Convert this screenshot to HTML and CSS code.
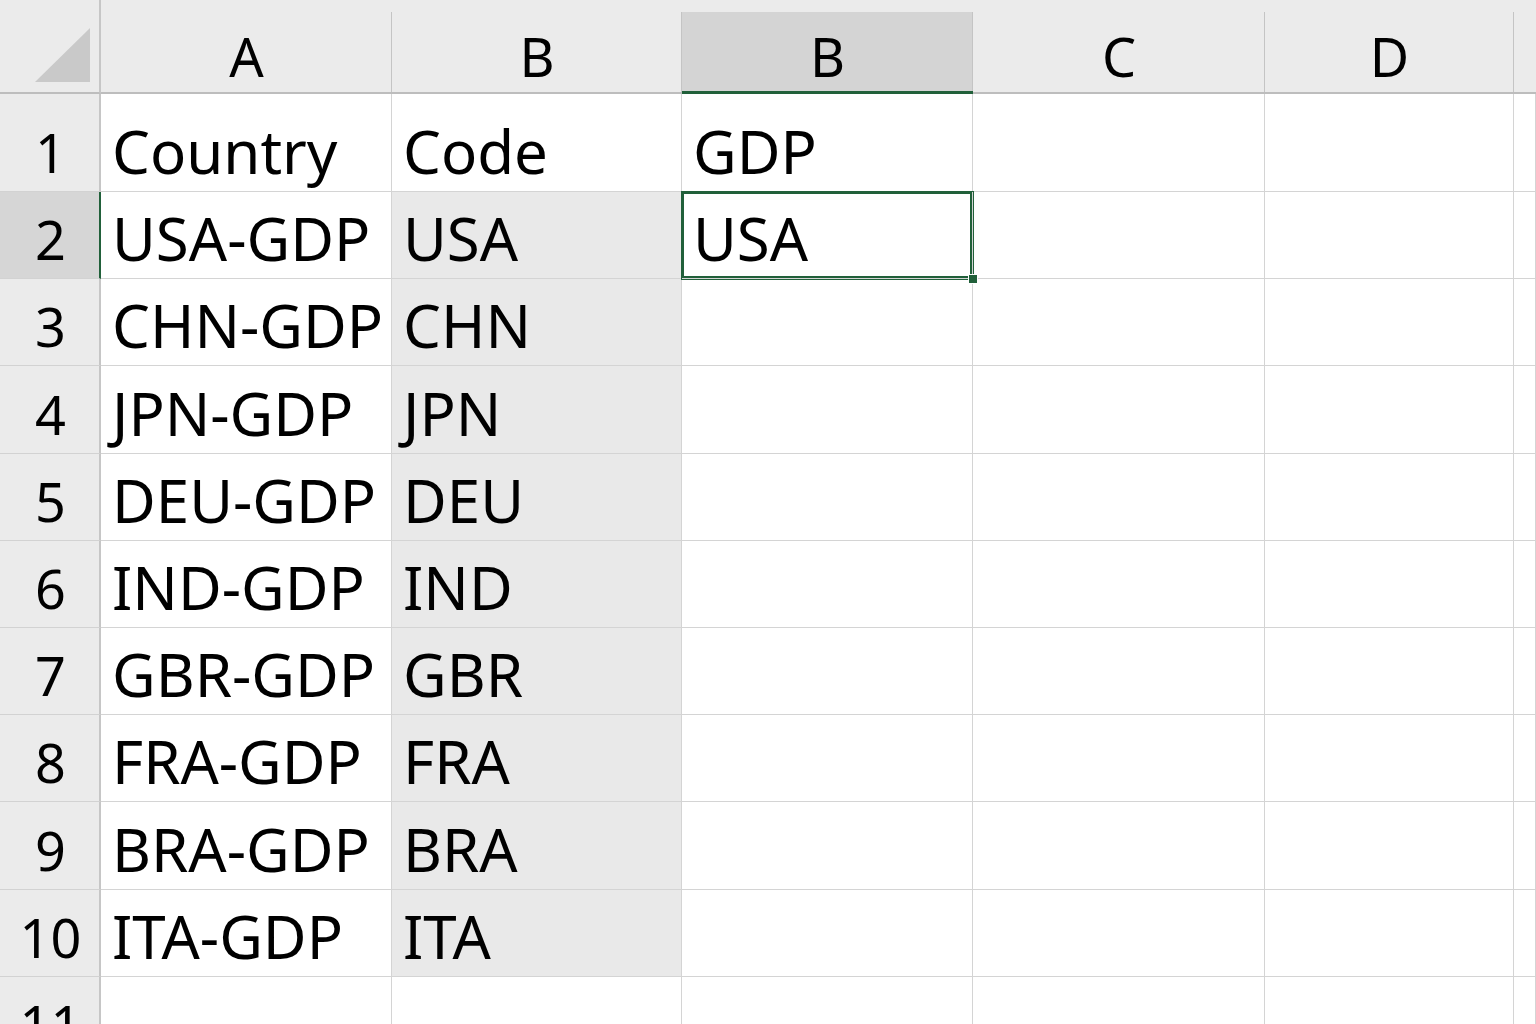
FILE: index.html
```html
<!DOCTYPE html>
<html lang="en">
<head>
  <meta charset="UTF-8">
  <title>Sheet1</title>
  <link rel="stylesheet" href="styles.css">
</head>
<body>
  <div class="sheet">
    <!-- column headers -->
    <div class="corner"><div class="corner-tri"></div></div>
    <div class="col-head">A</div>
    <div class="col-head">B</div>
    <div class="col-head selected">B</div>
    <div class="col-head">C</div>
    <div class="col-head">D</div>
    <div class="col-head last"></div>

    <div class="row-head">1</div>
    <div class="cell">Country</div>
    <div class="cell">Code</div>
    <div class="cell">GDP</div>
    <div class="cell"></div><div class="cell"></div><div class="cell last"></div>

    <div class="row-head selected">2</div>
    <div class="cell row-mark">USA-GDP</div>
    <div class="cell shaded">USA</div>
    <div class="cell active">USA<span class="handle"></span></div>
    <div class="cell"></div><div class="cell"></div><div class="cell last"></div>

    <div class="row-head">3</div>
    <div class="cell">CHN-GDP</div>
    <div class="cell shaded">CHN</div>
    <div class="cell"></div><div class="cell"></div><div class="cell"></div><div class="cell last"></div>

    <div class="row-head">4</div>
    <div class="cell">JPN-GDP</div>
    <div class="cell shaded">JPN</div>
    <div class="cell"></div><div class="cell"></div><div class="cell"></div><div class="cell last"></div>

    <div class="row-head">5</div>
    <div class="cell">DEU-GDP</div>
    <div class="cell shaded">DEU</div>
    <div class="cell"></div><div class="cell"></div><div class="cell"></div><div class="cell last"></div>

    <div class="row-head">6</div>
    <div class="cell">IND-GDP</div>
    <div class="cell shaded">IND</div>
    <div class="cell"></div><div class="cell"></div><div class="cell"></div><div class="cell last"></div>

    <div class="row-head">7</div>
    <div class="cell">GBR-GDP</div>
    <div class="cell shaded">GBR</div>
    <div class="cell"></div><div class="cell"></div><div class="cell"></div><div class="cell last"></div>

    <div class="row-head">8</div>
    <div class="cell">FRA-GDP</div>
    <div class="cell shaded">FRA</div>
    <div class="cell"></div><div class="cell"></div><div class="cell"></div><div class="cell last"></div>

    <div class="row-head">9</div>
    <div class="cell">BRA-GDP</div>
    <div class="cell shaded">BRA</div>
    <div class="cell"></div><div class="cell"></div><div class="cell"></div><div class="cell last"></div>

    <div class="row-head">10</div>
    <div class="cell">ITA-GDP</div>
    <div class="cell shaded">ITA</div>
    <div class="cell"></div><div class="cell"></div><div class="cell"></div><div class="cell last"></div>

    <div class="row-head">11</div>
    <div class="cell"></div><div class="cell"></div><div class="cell"></div><div class="cell"></div><div class="cell"></div><div class="cell last"></div>
  </div>
</body>
</html>
```

FILE: styles.css
```css
* {
  margin: 0;
  padding: 0;
  box-sizing: border-box;
}

body {
  font-family: "Noto Sans", "Open Sans", sans-serif;
  background-color: #ffffff;
  color: #000;
  width: 1536px;
  height: 1024px;
  overflow: hidden;
}

.sheet {
  display: grid;
  grid-template-columns: 101px 291px 290px 291px 292px 249px 1fr;
  grid-template-rows: 94px 98px 87px 87px 88px 87px 87px 87px 87px 88px 87px 87px;
}

.corner {
  background-color: #ebebeb;
  border-right: 2px solid #c6c6c6;
  border-bottom: 2px solid #bdbdbd;
  position: relative;
}

.corner-tri {
  position: absolute;
  left: 35px;
  top: 28px;
  width: 55px;
  height: 54px;
  background-color: #c9c9c9;
  clip-path: polygon(100% 0, 100% 100%, 0 100%);
}

.col-head {
  background-color: #ebebeb;
  border-bottom: 2px solid #bdbdbd;
  display: flex;
  justify-content: center;
  align-items: center;
  padding-top: 20px;
  font-size: 54px;
  position: relative;
}

/* separators in the header start a little below the top */
.col-head::after {
  content: "";
  position: absolute;
  right: 0;
  top: 12px;
  bottom: 0;
  width: 1px;
  background-color: #c4c4c4;
}

.col-head.selected {
  background: linear-gradient(#ebebeb 0 12px, #d4d4d4 12px);
  border-bottom: 3px solid #21603a;
}

.col-head.last::after {
  display: none;
}

.row-head {
  background-color: #ebebeb;
  border-right: 2px solid #c6c6c6;
  border-bottom: 1px solid #d2d2d2;
  display: flex;
  justify-content: center;
  align-items: flex-end;
  font-size: 54px;
  line-height: 1;
  padding: 0 0 12px 2px;
}

.row-head.selected {
  background-color: #d6d6d6;
  border-right: 2px solid #21603a;
}

.cell {
  border-right: 1px solid #d4d4d4;
  border-bottom: 1px solid #d4d4d4;
  display: flex;
  align-items: flex-end;
  padding: 0 0 10px 11px;
  font-size: 60px;
  line-height: 1;
  white-space: nowrap;
  position: relative;
}

.cell.shaded {
  background-color: #e9e9e9;
}

.cell.active {
  box-shadow: inset 0 0 0 2px #21603a;
  outline: 1px solid #21603a;
  outline-offset: 0;
  z-index: 1;
}

.handle {
  position: absolute;
  right: -6px;
  bottom: -6px;
  width: 10px;
  height: 10px;
  background-color: #21603a;
  border: 1px solid #ffffff;
}
```
